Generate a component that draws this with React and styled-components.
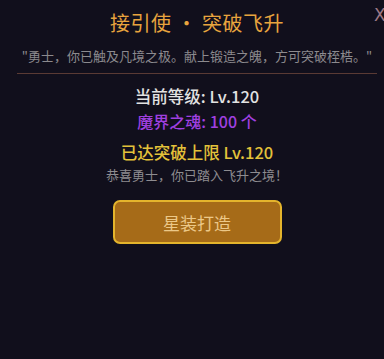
import React from "react";
import styled, { createGlobalStyle } from "styled-components";

const Global = createGlobalStyle`
  html, body { margin: 0; padding: 0; background: #110f1c; }
  body { font-family: "Noto Sans CJK SC", "Noto Sans", sans-serif; }
`;

const Panel = styled.div`
  position: relative;
  width: 384px;
  height: 359px;
  overflow: hidden;
  background: #110f1c;
  box-sizing: border-box;
  padding: 7px 7px 0 17px;
  display: flex;
  flex-direction: column;
  align-items: center;
`;

const Close = styled.div`
  position: absolute;
  top: 1px;
  left: 374px;
  font-family: "DejaVu Sans", sans-serif;
  font-size: 17px;
  color: #9c7886;
  line-height: 28px;
`;

const Title = styled.h1`
  margin: 0;
  font-size: 20px;
  font-weight: 400;
  line-height: 32px;
  color: #e8a43e;
  letter-spacing: 0.5px;
`;

const Quote = styled.p`
  margin: 8px 0 0;
  font-size: 13px;
  line-height: 18px;
  color: #8c8a8e;
  white-space: nowrap;
`;

const Divider = styled.hr`
  align-self: stretch;
  margin: 8px 0 0;
  border: none;
  height: 1px;
  background: #5a3a34;
`;

const Line = styled.div`
  font-size: ${(p) => p.$size}px;
  line-height: ${(p) => p.$lh}px;
  color: ${(p) => p.$color};
  margin-top: ${(p) => p.$mt}px;
  font-weight: ${(p) => p.$weight || 500};
  white-space: nowrap;
`;

const Button = styled.button`
  margin-top: 16.5px;
  width: 169px;
  height: 44px;
  box-sizing: border-box;
  border: 2px solid #e4b42c;
  border-radius: 7px;
  background: #a66b18;
  color: #ecc888;
  font-family: "Noto Sans CJK SC", sans-serif;
  font-size: 17px;
  font-weight: 400;
  cursor: pointer;
`;

export default function App() {
  return (
    <>
      <Global />
      <Panel>
        <Close>X</Close>
        <Title>接引使 · 突破飞升</Title>
        <Quote>"勇士，你已触及凡境之极。献上锻造之魄，方可突破桎梏。"</Quote>
        <Divider />
        <Line $size={16.5} $lh={22} $color="#e2e2e2" $mt={11}>当前等级: Lv.120</Line>
        <Line $size={16} $lh={22} $color="#a040e0" $mt={2.5}>魔界之魂: 100 个</Line>
        <Line $size={16.5} $lh={22} $color="#e4c23a" $mt={9}>已达突破上限 Lv.120</Line>
        <Line $size={13} $lh={18} $color="#8e8c90" $mt={3} $weight={400}>恭喜勇士，你已踏入飞升之境！</Line>
        <Button>星装打造</Button>
      </Panel>
    </>
  );
}
